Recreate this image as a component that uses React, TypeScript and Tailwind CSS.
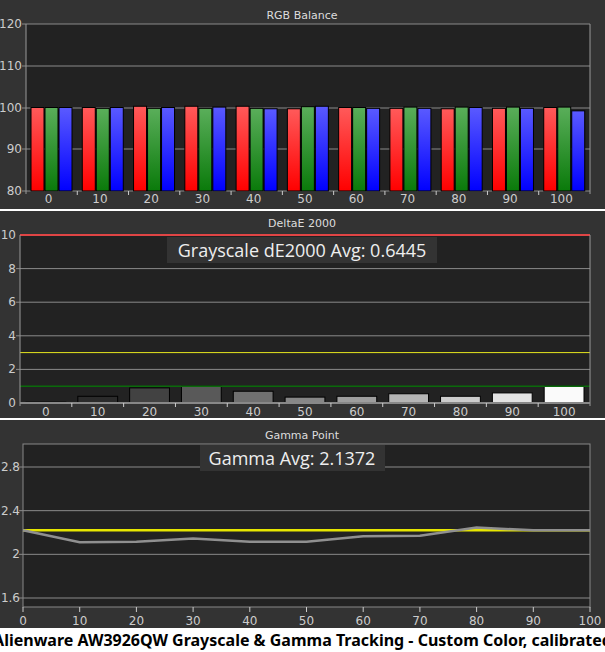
const F = "'DejaVu Sans', 'Liberation Sans', sans-serif";

function Grid({ x0, x1, ys }: { x0: number; x1: number; ys: number[] }) {
  return (
    <>
      {ys.map((y) => (
        <line key={y} x1={x0 - 4} x2={x1} y1={y} y2={y} stroke="#8a8a8a" strokeWidth={1} />
      ))}
    </>
  );
}

function RgbChart() {
  const x0 = 26, x1 = 590, top = 24, bot = 191;
  const sy = (v: number) => bot - ((v - 80) / 40) * (bot - top);
  const vals = [
    [100, 100, 100], [100, 99.8, 100], [100.3, 99.8, 100], [100.3, 99.8, 100.1], [100.3, 99.8, 99.7],
    [99.7, 100.2, 100.3], [100, 100, 99.8], [99.8, 100.1, 99.8], [99.7, 100.1, 100], [99.8, 100.1, 99.8], [100, 100.1, 99.2],
  ];
  const cw = (x1 - x0) / 11;
  const fills = ["url(#gr)", "url(#gg)", "url(#gb)"];
  return (
    <svg width={605} height={209} className="block">
      <defs>
        <linearGradient id="gr" x1="0" y1="0" x2="0" y2="1"><stop offset="0" stopColor="#ff5a5a" /><stop offset="1" stopColor="#ff0000" /></linearGradient>
        <linearGradient id="gg" x1="0" y1="0" x2="0" y2="1"><stop offset="0" stopColor="#5aae5a" /><stop offset="1" stopColor="#0a7a0a" /></linearGradient>
        <linearGradient id="gb" x1="0" y1="0" x2="0" y2="1"><stop offset="0" stopColor="#5a5aff" /><stop offset="1" stopColor="#0000ff" /></linearGradient>
      </defs>
      <text x={302} y={19} fill="#ddd" fontSize={11} textAnchor="middle" fontFamily={F}>RGB Balance</text>
      <rect x={x0} y={top} width={x1 - x0} height={bot - top} fill="#222" />
      <Grid x0={x0} x1={x1} ys={[24, 66, 108, 149, 191]} />
      {[120, 110, 100, 90, 80].map((v, i) => (
        <text key={v} x={x0 - 4} y={[24, 66, 108, 149, 191][i] + 4} fill="#ccc" fontSize={12} textAnchor="end" fontFamily={F}>{v}</text>
      ))}
      {vals.map((g, i) =>
        g.map((v, j) => (
          <rect key={i + "-" + j} x={x0 + i * cw + 5 + j * 14} y={sy(v)} width={13} height={bot - sy(v)} fill={fills[j]} stroke="#000" strokeWidth={1} />
        ))
      )}
      <line x1={x0} x2={x0} y1={top} y2={bot + 3} stroke="#999" />
      <line x1={x1} x2={x1} y1={top} y2={bot + 3} stroke="#999" />
      {Array.from({ length: 10 }, (_, i) => (
        <line key={i} x1={x0 + (i + 1) * cw} x2={x0 + (i + 1) * cw} y1={bot} y2={bot + 4} stroke="#ccc" />
      ))}
      {vals.map((_, i) => (
        <text key={i} x={x0 + i * cw + cw / 2 - 3} y={203} fill="#ccc" fontSize={12} textAnchor="middle" fontFamily={F}>{i * 10}</text>
      ))}
    </svg>
  );
}

function DeltaChart() {
  const x0 = 20, x1 = 590, top = 24, bot = 192;
  const sy = (v: number) => bot - (v / 10) * (bot - top);
  const vals = [0.05, 0.4, 0.9, 1.0, 0.7, 0.35, 0.4, 0.55, 0.4, 0.6, 1.0];
  const cw = (x1 - x0) / 11;
  return (
    <svg width={605} height={208} className="block">
      <text x={302} y={16} fill="#ddd" fontSize={11} textAnchor="middle" fontFamily={F}>DeltaE 2000</text>
      <rect x={x0} y={top} width={x1 - x0} height={bot - top} fill="#222" />
      <Grid x0={x0} x1={x1} ys={[sy(8), sy(6), sy(4), sy(2)]} />
      {[10, 8, 6, 4, 2, 0].map((v) => (
        <text key={v} x={x0 - 4} y={sy(v) + 4} fill="#ccc" fontSize={12} textAnchor="end" fontFamily={F}>{v}</text>
      ))}
      {vals.map((v, i) => {
        const c = Math.round(20 + i * 23);
        return (
          <rect key={i} x={x0 + i * cw + 6} y={sy(v)} width={cw - 12} height={bot - sy(v)} fill={`rgb(${c},${c},${c})`} stroke="#000" />
        );
      })}
      <line x1={x0} x2={x1} y1={sy(3)} y2={sy(3)} stroke="#e6e61e" />
      <line x1={x0} x2={x1} y1={sy(1)} y2={sy(1)} stroke="#0a6a0a" strokeWidth={1.5} />
      <line x1={x0} x2={x1} y1={top} y2={top} stroke="#e04545" strokeWidth={2} />
      <rect x={167} y={26} width={270} height={26} fill="#333" />
      <text x={302} y={46} fill="#eee" fontSize={18} textAnchor="middle" fontFamily="'Open Sans', sans-serif">Grayscale dE2000 Avg: 0.6445</text>
      <line x1={x0} x2={x0} y1={top} y2={bot + 3} stroke="#999" />
      <line x1={x1} x2={x1} y1={top} y2={bot + 3} stroke="#999" />
      <line x1={x0} x2={x1} y1={bot} y2={bot} stroke="#888" strokeWidth={2} />
      {Array.from({ length: 10 }, (_, i) => (
        <line key={i} x1={x0 + (i + 1) * cw} x2={x0 + (i + 1) * cw} y1={bot} y2={bot + 4} stroke="#ccc" />
      ))}
      {vals.map((_, i) => (
        <text key={i} x={x0 + i * cw + cw / 2} y={205} fill="#ccc" fontSize={12} textAnchor="middle" fontFamily={F}>{i * 10}</text>
      ))}
    </svg>
  );
}

function GammaChart() {
  const x0 = 23, x1 = 590, top = 24, bot = 187;
  const sy = (v: number) => 178 - ((v - 1.6) / 1.2) * (178 - 47);
  const sx = (i: number) => x0 + (i / 10) * (x1 - x0);
  const vals = [2.22, 2.11, 2.115, 2.145, 2.115, 2.115, 2.165, 2.17, 2.245, 2.22, 2.22];
  const pts = vals.map((v, i) => `${sx(i)},${sy(v)}`).join(" ");
  return (
    <svg width={605} height={208} className="block">
      <text x={302} y={19} fill="#ddd" fontSize={11} textAnchor="middle" fontFamily={F}>Gamma Point</text>
      <rect x={x0} y={top} width={x1 - x0} height={bot - top} fill="#222" stroke="#888" />
      <Grid x0={x0} x1={x1} ys={[sy(2.8), sy(2.4), sy(2), sy(1.6)]} />
      {[2.8, 2.4, 2, 1.6].map((v) => (
        <text key={v} x={x0 - 3} y={sy(v) + 4} fill="#ccc" fontSize={12} textAnchor="end" fontFamily={F}>{v}</text>
      ))}
      <rect x={200} y={25} width={185} height={26} fill="#333" />
      <text x={292} y={45} fill="#eee" fontSize={18} textAnchor="middle" fontFamily="'Open Sans', sans-serif">Gamma Avg: 2.1372</text>
      <line x1={x0} x2={x1} y1={sy(2.22)} y2={sy(2.22)} stroke="#e6e600" strokeWidth={2.5} />
      <polyline points={pts} fill="none" stroke="#909090" strokeWidth={2.5} />
      {vals.map((_, i) => (
        <g key={i}>
          <line x1={sx(i)} x2={sx(i)} y1={bot} y2={bot + 5} stroke="#ccc" />
          <text x={sx(i)} y={205} fill="#ccc" fontSize={12} textAnchor="middle" fontFamily={F}>{i * 10}</text>
        </g>
      ))}
    </svg>
  );
}

export default function App() {
  return (
    <div className="w-[605px] h-[652px] bg-[#333] flex flex-col overflow-hidden">
      <RgbChart />
      <div className="h-[2px] bg-white" />
      <DeltaChart />
      <div className="h-[2px] bg-white" />
      <GammaChart />
      <div className="flex-1 bg-white flex items-center justify-center text-[16px] font-bold text-black font-['Open_Sans',sans-serif] whitespace-nowrap">
        Alienware AW3926QW Grayscale &amp; Gamma Tracking - Custom Color, calibrated
      </div>
    </div>
  );
}
